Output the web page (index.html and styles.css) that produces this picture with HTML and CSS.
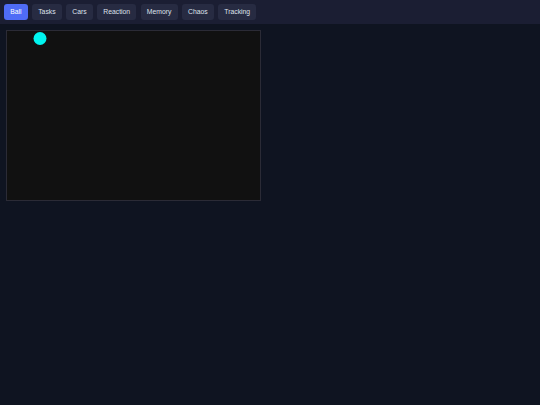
FILE: index.html
```html
<!DOCTYPE html>
<html>
<head>
<meta charset="utf-8">
<link rel="stylesheet" href="styles.css">
</head>
<body>
<nav class="nav">
  <button class="tab active">Ball</button>
  <button class="tab">Tasks</button>
  <button class="tab">Cars</button>
  <button class="tab">Reaction</button>
  <button class="tab">Memory</button>
  <button class="tab">Chaos</button>
  <button class="tab">Tracking</button>
</nav>
<main class="main">
  <svg class="stage" width="255" height="171" viewBox="0 0 255 171">
    <rect x="0.5" y="0.5" width="254" height="170" fill="#111111" stroke="#2b2b36" stroke-width="1"/>
    <circle cx="34" cy="8.5" r="6.5" fill="#00f5f0"/>
  </svg>
</main>
</body>
</html>
```

FILE: styles.css
```css
html, body {
  margin: 0;
  padding: 0;
  background: #0f1421;
  font-family: "Liberation Sans", Arial, sans-serif;
}
.nav {
  display: flex;
  gap: 4.3px;
  padding: 4px;
  height: 16px;
  background: #1b1e33;
}
.tab {
  height: 16px;
  padding: 0 6.2px;
  border: none;
  border-radius: 3px;
  background: #272b42;
  color: #dfe2ec;
  font-family: "Liberation Sans", Arial, sans-serif;
  font-size: 6.8px;
  line-height: 16px;
  cursor: pointer;
}
.tab.active {
  background: #4f6cf6;
  color: #ffffff;
}
.main {
  padding: 6px;
}
.stage {
  display: block;
}
```
